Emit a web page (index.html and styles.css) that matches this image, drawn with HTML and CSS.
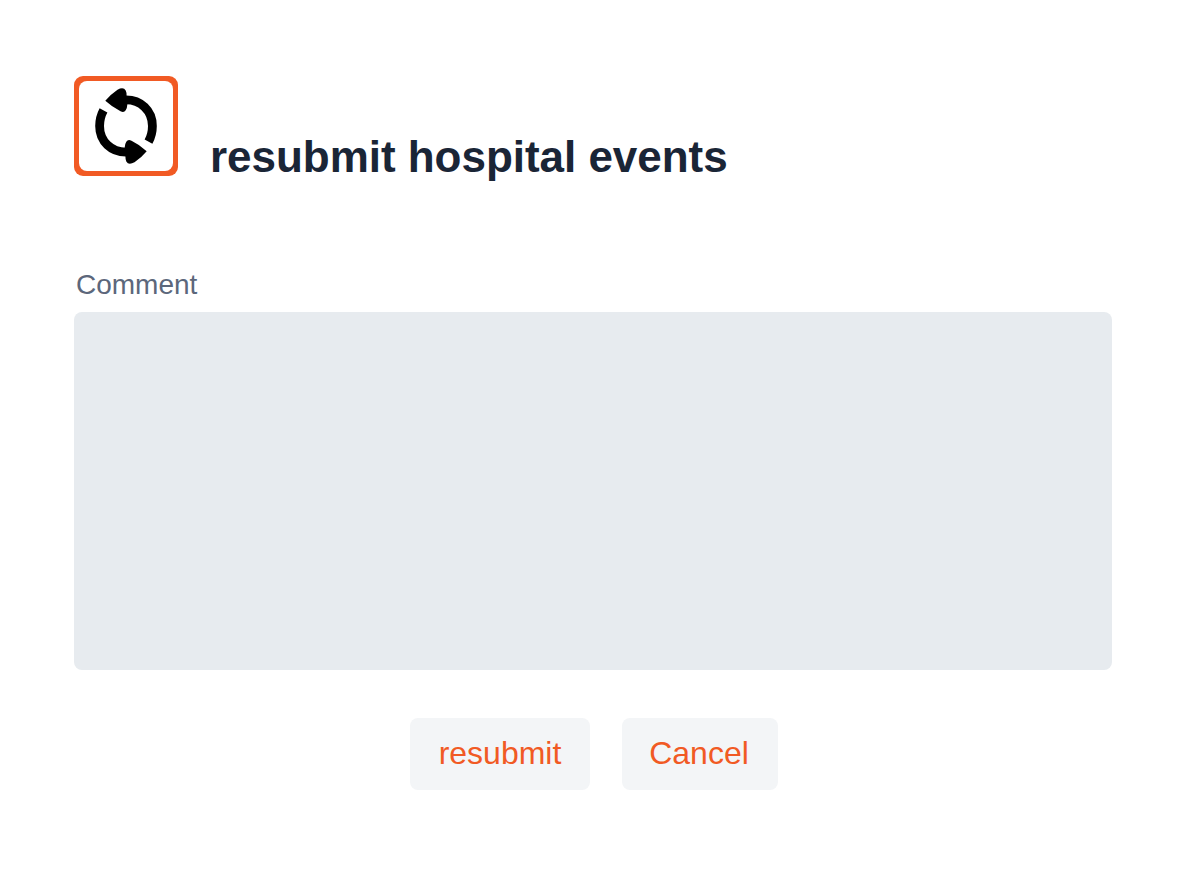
FILE: index.html
```html
<!DOCTYPE html>
<html lang="en">
<head>
<meta charset="utf-8">
<title>resubmit hospital events</title>
<link rel="stylesheet" href="styles.css">
</head>
<body>
<main class="dialog">
  <header class="header">
    <svg class="icon" viewBox="0 0 104 100" aria-hidden="true">
      <rect width="104" height="100" rx="9" fill="#f15a24"/>
      <rect x="5" y="5" width="94" height="90" rx="8" fill="#fff"/>
      <g id="arrow">
        <path d="M50 24C67 23 78.400 35 78.400 50Q78.400 58.500 74.500 65.700" fill="none" stroke="#000" stroke-width="8.800"/>
        <path d="M31.300 24.800Q37 18 43.500 13.700Q49.500 10.500 51.700 14.500Q52.600 16 52.600 20L53.400 28Q53.200 32 51.700 34.200Q50 37 46.500 35.200Q38 31 31.300 24.800Z"/>
      </g>
      <use href="#arrow" transform="rotate(180 52 50)"/>
    </svg>
    <h1 class="title">resubmit hospital events</h1>
  </header>
  <form class="form">
    <label class="label" for="comment">Comment</label>
    <textarea class="comment" id="comment"></textarea>
    <div class="actions">
      <button class="button button-submit" type="button">resubmit</button>
      <button class="button button-cancel" type="button">Cancel</button>
    </div>
  </form>
</main>
</body>
</html>
```
FILE: styles.css
```css
* { box-sizing: border-box; }
body {
  margin: 0;
  background: #fff;
  font-family: "Liberation Sans", Arial, sans-serif;
}
.dialog { padding: 76px 76px 0 74px; }
.header { display: flex; align-items: flex-start; gap: 32px; height: 192px; }
.icon { width: 104px; height: 100px; }
.title {
  margin: 55px 0 0;
  font-size: 44px;
  letter-spacing: -0.03px;
  line-height: 52px;
  font-weight: 700;
  color: #1a2536;
  white-space: nowrap;
}
.form { display: flex; flex-direction: column; }
.label {
  height: 44px;
  padding-left: 2px;
  font-size: 28px;
  line-height: 34px;
  color: #5c677b;
}
.comment {
  height: 358px;
  border: 0;
  border-radius: 8px;
  background: #e7ebef;
  resize: none;
}
.actions {
  display: flex;
  justify-content: center;
  gap: 32px;
  margin-top: 48px;
  padding-left: 2px;
}
.button {
  height: 72px;
  padding: 0 0 2px;
  border: 0;
  border-radius: 8px;
  background: #f3f5f7;
  color: #f15a24;
  font: 32px/70px "Liberation Sans", Arial, sans-serif;
}
.button-submit { width: 180px; }
.button-cancel { width: 156px; padding-right: 2px; }
```
